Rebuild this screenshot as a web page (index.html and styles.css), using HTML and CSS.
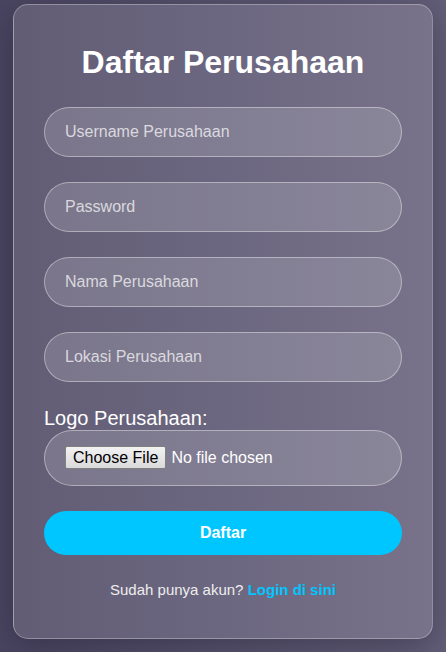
FILE: index.html
```html
<!DOCTYPE html>
<html lang="id">
<head>
<meta charset="utf-8">
<title>Daftar Perusahaan</title>
<link rel="stylesheet" href="styles.css">
</head>
<body>
<div class="card">
  <h2 class="title">Daftar Perusahaan</h2>
  <form class="form">
    <input class="field" type="text" placeholder="Username Perusahaan">
    <input class="field" type="password" placeholder="Password">
    <input class="field" type="text" placeholder="Nama Perusahaan">
    <input class="field" type="text" placeholder="Lokasi Perusahaan">
    <label class="label">Logo Perusahaan:</label>
    <input class="field file" type="file">
    <button class="submit" type="button">Daftar</button>
  </form>
  <p class="footer">Sudah punya akun? <a class="link" href="#">Login di sini</a></p>
</div>
</body>
</html>
```

FILE: styles.css
```css
html, body {
  height: 100%;
}
body {
  margin: 0;
  font-family: "Liberation Sans", Arial, sans-serif;
  background: linear-gradient(90deg, #4a4560 0%, #58536c 50%, #645f78 100%);
  display: flex;
  justify-content: center;
  align-items: flex-start;
  overflow: hidden;
}
.card {
  box-sizing: border-box;
  width: 420px;
  height: 635px;
  margin-top: 4px;
  padding: 39px 30px 30px;
  border: 1px solid rgba(255, 255, 255, 0.3);
  border-radius: 15px;
  background: linear-gradient(90deg, #625d75 0%, #6c6780 50%, #78738a 100%);
  box-shadow: 0 8px 32px rgba(20, 16, 40, 0.35);
  color: #fff;
}
.title {
  margin: 0 0 26px;
  font-size: 32px;
  font-weight: bold;
  text-align: center;
  line-height: 37px;
}
.form {
  display: flex;
  flex-direction: column;
}
.field {
  box-sizing: border-box;
  height: 50px;
  margin: 0 0 25px;
  padding: 15px 20px;
  border: 1px solid rgba(255, 255, 255, 0.4);
  border-radius: 25px;
  background: rgba(255, 255, 255, 0.15);
  color: #fff;
  font-family: "Liberation Sans", Arial, sans-serif;
  font-size: 16px;
  outline: none;
}
.field::placeholder {
  color: rgba(255, 255, 255, 0.72);
}
.label {
  font-size: 20px;
  line-height: 23px;
  margin: 0;
}
.file {
  height: 56px;
  border-radius: 28px;
}
.file::file-selector-button {
  font-family: "Liberation Sans", Arial, sans-serif;
  font-size: 16px;
  color: #000;
  height: 23px;
  padding: 0 7px;
  margin-right: 5px;
  border: 1px solid #808080;
  border-radius: 2px;
  background: linear-gradient(#f2f2f2, #dadada);
}
.submit {
  height: 44px;
  margin: 0;
  border: none;
  border-radius: 22px;
  background: #00c6ff;
  color: #fff;
  font-family: "Liberation Sans", Arial, sans-serif;
  font-size: 16px;
  font-weight: bold;
}
.footer {
  margin: 26px 0 0;
  text-align: center;
  font-size: 15px;
  line-height: 17px;
  color: #eee;
}
.link {
  color: #00c6ff;
  font-weight: bold;
  text-decoration: none;
}
```
